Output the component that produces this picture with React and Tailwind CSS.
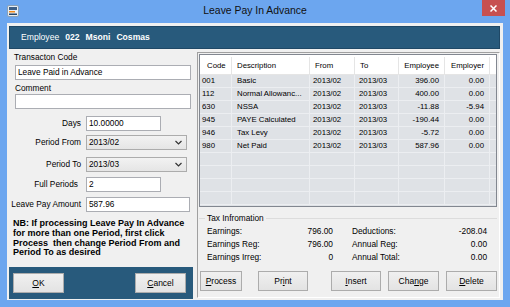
import React from "react";

const rows = [
  { code: "001", desc: "Basic", from: "2013/02", to: "2013/03", ee: "396.00", er: "0.00" },
  { code: "112", desc: "Normal Allowanc...", from: "2013/02", to: "2013/03", ee: "400.00", er: "0.00" },
  { code: "630", desc: "NSSA", from: "2013/02", to: "2013/03", ee: "-11.88", er: "-5.94" },
  { code: "945", desc: "PAYE Calculated", from: "2013/02", to: "2013/03", ee: "-190.44", er: "0.00" },
  { code: "946", desc: "Tax Levy", from: "2013/02", to: "2013/03", ee: "-5.72", er: "0.00" },
  { code: "980", desc: "Net Paid", from: "2013/02", to: "2013/03", ee: "587.96", er: "0.00" },
];

function Chevron() {
  return (
    <svg width="7" height="5" viewBox="0 0 7 5" className="mr-[4px]">
      <path d="M0.5 1 L3.5 4 L6.5 1" fill="none" stroke="#333" strokeWidth="1.2" />
    </svg>
  );
}

function Select({ value }) {
  return (
    <div className="w-[101px] h-[15px] border border-[#acacac] bg-gradient-to-b from-[#f2f2f2] to-[#e5e5e5] flex items-center justify-between pl-[2px]">
      <span>{value}</span>
      <Chevron />
    </div>
  );
}

function Field({ label, children, className = "" }) {
  return (
    <div className={"flex items-center " + className}>
      <div className="w-[73px] text-right pr-[1px]">{label}</div>
      <div className="ml-[4px]">{children}</div>
    </div>
  );
}

function Btn({ children, w, className = "" }) {
  return (
    <button
      className={
        "h-[20px] border border-[#acacac] bg-gradient-to-b from-[#f0f0f0] to-[#e3e3e3] flex items-center justify-center text-[8.5px] " +
        w +
        " " +
        className
      }
    >
      {children}
    </button>
  );
}

export default function App() {
  return (
    <div className="w-[510px] h-[307px] bg-[#6ca6ef] flex flex-col overflow-hidden font-['Liberation_Sans',Arial,sans-serif] text-[8.3px] text-black leading-none">
      {/* title bar */}
      <div className="h-[23px] grid grid-cols-[1fr_auto_1fr]">
        <div className="pl-[7px] pt-[5px]">
          <svg width="12" height="12" viewBox="0 0 12 12">
            <rect x="0.5" y="0.5" width="11" height="11" rx="1.5" fill="#e8eef4" stroke="#8aa0b4" />
            <rect x="2" y="2" width="8" height="3" fill="#3d5f86" />
            <rect x="2" y="6" width="6" height="1.5" fill="#f08a1c" />
            <rect x="2" y="8.5" width="8" height="1.5" fill="#24456a" />
          </svg>
        </div>
        <div className="pt-[6px] text-[10.4px] text-[#111]">Leave Pay In Advance</div>
        <div className="flex justify-end pr-[5px]">
          <div className="w-[23px] h-[16px] bg-[#c75050] flex items-center justify-center">
            <svg width="7" height="7" viewBox="0 0 7 7">
              <path d="M0.5 0.5 L6.5 6.5 M6.5 0.5 L0.5 6.5" stroke="#fff" strokeWidth="1.5" />
            </svg>
          </div>
        </div>
      </div>

      {/* client area */}
      <div className="mx-[7px] h-[277px] bg-[#f0f0f0] pt-[3px] px-[2px] pb-[1px] flex flex-col">
        {/* employee header */}
        <div className="h-[23px] mr-[1px] bg-[#285a7c] border border-[#1f4866] flex items-center pl-[11px] text-white text-[8.6px] gap-[6px]">
          <span>Employee</span>
          <span className="font-bold">022</span>
          <span className="font-bold">Msoni</span>
          <span className="font-bold">Cosmas</span>
        </div>

        <div className="flex-1 flex">
          {/* left column */}
          <div className="w-[186px] flex flex-col">
            <div className="pl-[5px] mt-[3px] h-[10px] flex items-center">Transacton Code</div>
            <div className="ml-[6px] mt-[3px] w-[176px] h-[15px] border border-[#abadb3] bg-white flex items-center pl-[2px]">
              Leave Paid in Advance
            </div>
            <div className="pl-[6px] mt-[3px] h-[10px] flex items-center">Comment</div>
            <div className="ml-[6px] mt-[1px] w-[176px] h-[15px] border border-[#abadb3] bg-white" />

            <Field label="Days" className="mt-[7px]">
              <div className="w-[75px] h-[15px] border border-[#abadb3] bg-white flex items-center pl-[2px]">10.00000</div>
            </Field>
            <Field label="Period From" className="mt-[4px]">
              <Select value="2013/02" />
            </Field>
            <Field label="Period To" className="mt-[7px]">
              <Select value="2013/03" />
            </Field>
            <Field label={<span className="pr-[3px]">Full Periods</span>} className="mt-[5px]">
              <div className="w-[75px] h-[15px] border border-[#abadb3] bg-white flex items-center pl-[2px]">2</div>
            </Field>
            <Field label="Leave Pay Amount" className="mt-[5px]">
              <div className="w-[104px] h-[15px] border border-[#abadb3] bg-white flex items-center pl-[2px]">587.96</div>
            </Field>

            <div className="mt-[7px] pl-[4px] font-bold text-[9px] leading-[9.8px]">
              NB: If processing Leave Pay In Advance
              <br />
              for more than one Period, first click
              <br />
              Process&nbsp; then change Period From and
              <br />
              Period To as desired
            </div>

            <div className="mt-auto mr-[2px] h-[32px] bg-[#285a7c] flex items-center justify-between pl-[4px] pr-[7px]">
              <Btn w="w-[51px]" className="border-[#3c7fb1] from-[#eef5fb] to-[#dfe9f3]">
                <span className="underline">O</span>K
              </Btn>
              <Btn w="w-[51px]">
                <span className="underline">C</span>ancel
              </Btn>
            </div>
          </div>

          {/* right column */}
          <div className="ml-[2px] mt-[3px] w-[303px] h-[246px] border border-t-[#a0a0a0] border-l-[#a0a0a0] border-r-white border-b-white pl-[1px] pt-[1px] flex flex-col">
            {/* list */}
            <div className="w-[298px] h-[153px] border border-[#828790] bg-[#dfe2e6] flex flex-col overflow-hidden text-[7.8px]">
              <div className="bg-white pt-[2px]">
                <div className="h-[18px] flex border-b border-[#e5e5e5]">
                  <div className="w-[32px] pl-[7px] flex items-center border-r border-[#e5e5e5]">Code</div>
                  <div className="w-[78px] pl-[5px] flex items-center border-r border-[#e5e5e5]">Description</div>
                  <div className="w-[45px] pl-[5px] flex items-center border-r border-[#e5e5e5]">From</div>
                  <div className="w-[44px] pl-[5px] flex items-center border-r border-[#e5e5e5]">To</div>
                  <div className="w-[46px] pr-[5px] flex items-center justify-end border-r border-[#e5e5e5]">Employee</div>
                  <div className="w-[45px] pr-[5px] flex items-center justify-end border-r border-[#e5e5e5]">Employer</div>
                  <div className="flex-1" />
                </div>
              </div>
              {[...rows, null, null, null, null].map((r, i) => (
                <div key={i} className="h-[13px] flex border-b border-[#eceef1] shrink-0">
                  <div className="w-[32px] pl-[2px] flex items-center border-r border-[#eceef1]">{r?.code}</div>
                  <div className="w-[78px] pl-[5px] flex items-center border-r border-[#eceef1] whitespace-nowrap">{r?.desc}</div>
                  <div className="w-[45px] pl-[3px] flex items-center border-r border-[#eceef1]">{r?.from}</div>
                  <div className="w-[44px] pl-[4px] flex items-center border-r border-[#eceef1]">{r?.to}</div>
                  <div className="w-[46px] pr-[5px] flex items-center justify-end border-r border-[#eceef1]">{r?.ee}</div>
                  <div className="w-[45px] pr-[5px] flex items-center justify-end border-r border-[#eceef1]">{r?.er}</div>
                  <div className="flex-1" />
                </div>
              ))}
            </div>

            {/* tax information */}
            <div className="w-[298px] mt-[6px] flex items-center h-[10px]">
              <div className="w-[6px] h-px bg-[#dcdcdc]" />
              <span className="px-[2px]">Tax Infromation</span>
              <div className="flex-1 h-px bg-[#dcdcdc]" />
            </div>
            <div className="w-[298px] pl-[8px] mt-[2px] grid grid-cols-[90px_36px_19px_95px_40px] auto-rows-[13px] items-center">
              <span>Earnings:</span>
              <span className="text-right">796.00</span>
              <span />
              <span>Deductions:</span>
              <span className="text-right">-208.04</span>
              <span>Earnings Reg:</span>
              <span className="text-right">796.00</span>
              <span />
              <span>Annual Reg:</span>
              <span className="text-right">0.00</span>
              <span>Earnings Irreg:</span>
              <span className="text-right">0</span>
              <span />
              <span>Annual Total:</span>
              <span className="text-right">0.00</span>
            </div>

            <div className="mt-[7px] flex pl-[1px]">
              <Btn w="w-[42px]">
                <span className="underline">P</span>rocess
              </Btn>
              <Btn w="w-[50px]" className="ml-[16px]">
                Pr<span className="underline">i</span>nt
              </Btn>
              <Btn w="w-[50px]" className="ml-[23px]">
                <span className="underline">I</span>nsert
              </Btn>
              <Btn w="w-[51px]" className="ml-[7px]">
                Cha<span className="underline">n</span>ge
              </Btn>
              <Btn w="w-[51px]" className="ml-[7px]">
                <span className="underline">D</span>elete
              </Btn>
            </div>
          </div>
        </div>
      </div>
    </div>
  );
}
